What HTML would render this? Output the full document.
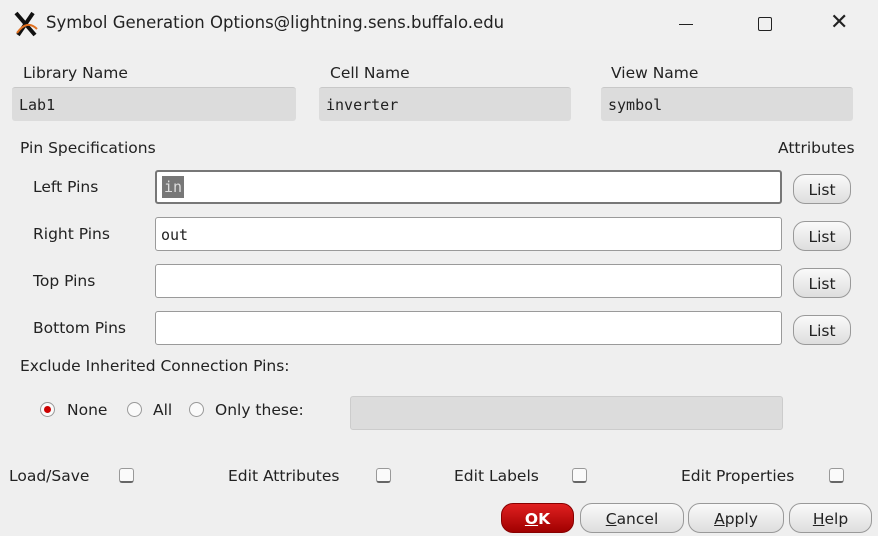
<!DOCTYPE html>
<html><head><style>
body{margin:0;width:878px;height:536px;background:#efefef;font-family:"DejaVu Sans","Liberation Sans",sans-serif;font-size:15.5px;color:#222;position:relative;overflow:hidden}
.a{position:absolute;white-space:nowrap}
.ro{position:absolute;background:#dcdcdc;border-radius:3px;border-top:1px solid #c8c8c8;font-family:"DejaVu Sans Mono","Liberation Mono",monospace;font-size:15px;line-height:34px;padding-left:7px;box-sizing:border-box}
.in{position:absolute;left:155px;width:627px;height:34px;background:#fff;border:1px solid #9a9a9a;border-radius:3px;box-sizing:border-box;font-family:"DejaVu Sans Mono","Liberation Mono",monospace;font-size:15px;line-height:34px;padding-left:5px}
.btn{position:absolute;height:30px;border:1px solid #999;border-radius:12px;background:linear-gradient(#fafafa,#dedede);box-sizing:border-box;text-align:center;line-height:30px;font-size:15.5px}
.cb{position:absolute;width:15px;height:15px;border:1px solid #999;border-bottom:2px solid #666;border-radius:3px;background:#fafafa;box-sizing:border-box}
.rd{position:absolute;width:15px;height:15px;border:1px solid #999;border-radius:50%;background:#fafafa;box-sizing:border-box}
</style></head><body>
<div class="a" style="left:0;top:0;width:878px;height:50px;background:#f0f0f0"></div>
<svg class="a" style="left:13px;top:11px" width="26" height="26"><path d="M3 2 L22 24 M20 2 L5 24" stroke="#111" stroke-width="4"/><path d="M4 22 Q14 8 24 18" stroke="#e07020" stroke-width="2" fill="none"/></svg>
<div class="a" style="left:46px;top:13px;font-size:16.5px">Symbol Generation Options@lightning.sens.buffalo.edu</div>
<div class="a" style="left:679px;top:24px;width:14px;height:1px;background:#222"></div>
<div class="a" style="left:758px;top:17px;width:12px;height:12px;border:1.5px solid #222;border-radius:2px"></div>
<div class="a" style="left:830px;top:10px;font-size:22px">✕</div>

<div class="a" style="left:23px;top:64px">Library Name</div>
<div class="a" style="left:330px;top:64px">Cell Name</div>
<div class="a" style="left:611px;top:64px">View Name</div>
<div class="ro" style="left:12px;top:87px;width:284px;height:34px">Lab1</div>
<div class="ro" style="left:319px;top:87px;width:252px;height:34px">inverter</div>
<div class="ro" style="left:601px;top:87px;width:252px;height:34px">symbol</div>

<div class="a" style="left:20px;top:139px">Pin Specifications</div>
<div class="a" style="left:778px;top:139px">Attributes</div>

<div class="a" style="left:33px;top:178px">Left Pins</div>
<div class="in" style="top:170px;border:2px solid #777;line-height:30px"><span style="background:#777;color:#ddd;padding:2px 2px">in</span></div>
<div class="btn" style="left:793px;top:174px;width:58px">List</div>
<div class="a" style="left:33px;top:225px">Right Pins</div>
<div class="in" style="top:217px">out</div>
<div class="btn" style="left:793px;top:221px;width:58px">List</div>
<div class="a" style="left:33px;top:272px">Top Pins</div>
<div class="in" style="top:264px"></div>
<div class="btn" style="left:793px;top:268px;width:58px">List</div>
<div class="a" style="left:33px;top:319px">Bottom Pins</div>
<div class="in" style="top:311px"></div>
<div class="btn" style="left:793px;top:315px;width:58px">List</div>

<div class="a" style="left:20px;top:357px">Exclude Inherited Connection Pins:</div>
<div class="rd" style="left:40px;top:402px"><div style="position:absolute;left:3px;top:3px;width:7px;height:7px;border-radius:50%;background:#c00"></div></div>
<div class="a" style="left:67px;top:401px">None</div>
<div class="rd" style="left:127px;top:402px"></div>
<div class="a" style="left:153px;top:401px">All</div>
<div class="rd" style="left:189px;top:402px"></div>
<div class="a" style="left:215px;top:401px">Only these:</div>
<div class="a" style="left:350px;top:396px;width:433px;height:34px;background:#dcdcdc;border:1px solid #ccc;border-radius:3px;box-sizing:border-box"></div>

<div class="a" style="left:9px;top:467px">Load/Save</div>
<div class="cb" style="left:119px;top:468px"></div>
<div class="a" style="left:228px;top:467px">Edit Attributes</div>
<div class="cb" style="left:376px;top:468px"></div>
<div class="a" style="left:454px;top:467px">Edit Labels</div>
<div class="cb" style="left:572px;top:468px"></div>
<div class="a" style="left:681px;top:467px">Edit Properties</div>
<div class="cb" style="left:829px;top:468px"></div>

<div class="btn" style="left:501px;top:503px;width:73px;background:linear-gradient(#e02020,#a00000);border-color:#800;color:#fff;font-weight:bold"><u>O</u>K</div>
<div class="btn" style="left:580px;top:503px;width:104px"><u>C</u>ancel</div>
<div class="btn" style="left:688px;top:503px;width:96px"><u>A</u>pply</div>
<div class="btn" style="left:789px;top:503px;width:83px"><u>H</u>elp</div>
</body></html>
